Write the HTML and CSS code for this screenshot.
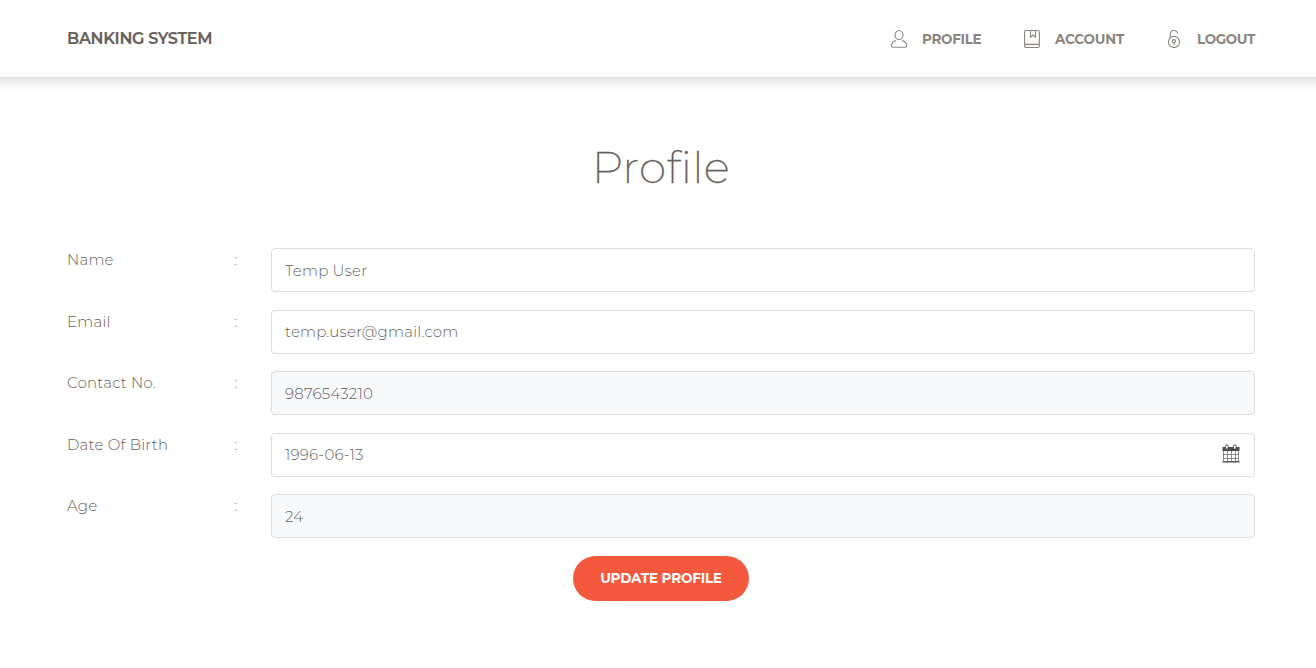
FILE: index.html
```html
<!DOCTYPE html>
<html lang="en">
<head>
<meta charset="utf-8">
<title>Profile</title>
<link rel="stylesheet" href="styles.css">
</head>
<body>
<header class="navbar">
  <a class="brand">BANKING SYSTEM</a>
  <nav class="nav">
    <a class="nav-link nav-profile">
      <svg class="nav-icon" viewBox="0 0 18 20"><ellipse cx="9" cy="6" rx="4" ry="4.5"/><path d="M5.9 11.6C3.2 12.2 1.5 14 1.5 16.7Q1.5 18.3 3.3 18.3H14.7Q16.5 18.3 16.5 16.7C16.5 14 14.8 12.2 12.1 11.6"/></svg>
      <span>PROFILE</span>
    </a>
    <a class="nav-link nav-account">
      <svg class="nav-icon" viewBox="0 0 18 20"><path d="M3.2 1.5H14.8Q16.4 1.5 16.4 3.1V16.9Q16.4 18.5 14.8 18.5H3.2Q1.6 18.5 1.6 16.9V3.1Q1.6 1.5 3.2 1.5ZM1.8 15.4H16.2M7.5 1.5V8.2L10 6L12.5 8.2V1.5"/></svg>
      <span>ACCOUNT</span>
    </a>
    <a class="nav-link nav-logout">
      <svg class="nav-icon" viewBox="0 0 18 20"><circle cx="9" cy="13" r="5.6"/><path d="M5.2 8.8V5.2C5.2 .3 12.3 .3 12.8 4.8M9 13.8V16"/><circle cx="9" cy="12.2" r="1.6"/></svg>
      <span>LOGOUT</span>
    </a>
  </nav>
</header>
<main class="content">
  <h1 class="title">Profile</h1>
  <form class="form">
    <div class="row"><label class="label">Name</label><span class="colon">:</span><div class="field"><span>Temp User</span></div></div>
    <div class="row"><label class="label">Email</label><span class="colon">:</span><div class="field"><span>temp.user@gmail.com</span></div></div>
    <div class="row"><label class="label">Contact No.</label><span class="colon">:</span><div class="field readonly"><span>9876543210</span></div></div>
    <div class="row"><label class="label">Date Of Birth</label><span class="colon">:</span><div class="field"><span>1996-06-13</span>
      <svg class="calendar" viewBox="0 0 18 19"><path class="cal-grid" d="M1.5 6V17.5H16.5V6M1 10.5H17M1 14.5H17M5.5 7V18M9.5 7V18M13.5 7V18"/><path class="cal-head" d="M.5 3H17.5V7H.5ZM.5 17.3H17.5V18.5H.5Z"/><rect class="cal-ring" x="3.5" y=".8" width="2.6" height="4.4" rx="1.3"/><rect class="cal-ring" x="11.5" y=".8" width="2.6" height="4.4" rx="1.3"/></svg>
    </div></div>
    <div class="row"><label class="label">Age</label><span class="colon">:</span><div class="field readonly"><span>24</span></div></div>
    <button class="submit" type="button">UPDATE PROFILE</button>
  </form>
</main>
</body>
</html>
```
FILE: styles.css
```css
* { box-sizing: border-box; }
body {
  margin: 0;
  background: #fff;
  color: #66615b;
  font-family: Montserrat, Inter, "Open Sans", sans-serif;
  font-size: 15px;
  font-weight: 300;
  letter-spacing: .22px;
}
.navbar {
  position: relative;
  height: 77px;
  padding: 0 60px 0 67px;
  display: flex;
  align-items: center;
  justify-content: space-between;
}
/* Shadow below the bar, even across the full width */
.navbar::after {
  content: "";
  position: absolute;
  top: 100%;
  left: 0;
  right: 0;
  height: 15px;
  background: linear-gradient(rgba(0, 0, 0, .11), rgba(0, 0, 0, .06) 35%, rgba(0, 0, 0, .018) 70%, transparent);
}
.brand { font-size: 16px; font-weight: 600; letter-spacing: -.3px; white-space: nowrap; -webkit-text-stroke: .2px; }
.nav { display: flex; gap: 41px; padding-top: 1px; }
.nav-link {
  display: flex;
  align-items: center;
  gap: 14px;
  color: #8a857f;
  font-size: 13.5px;
  font-weight: 700;
  white-space: nowrap;
}
.nav-icon { width: 18px; height: 20px; fill: none; stroke: #8a857f; stroke-width: 1.1; }
.nav-profile span { width: 60px; letter-spacing: -.28px; }
.nav-account span { width: 70px; letter-spacing: -.15px; }
.nav-logout span { width: 59px; letter-spacing: -.35px; }
.nav-logout { margin-left: -1px; }
.content { padding: 55px 61px 0 67px; }
.title {
  margin: 0 0 46px;
  height: 70px;
  line-height: 70px;
  text-align: center;
  font-size: 44px;
  font-weight: 200;
  letter-spacing: .35px;
  -webkit-text-stroke: .3px;
}
.form { display: flex; flex-direction: column; gap: 17.5px; }
.row { display: grid; grid-template-columns: 167px 37px 1fr; height: 44px; }
.label, .colon { line-height: 23px; white-space: nowrap; }
.colon { opacity: .85; }
.field {
  display: flex;
  align-items: center;
  justify-content: space-between;
  padding: 0 14px 0 13px;
  border: 1px solid #ddd;
  border-radius: 4px;
}
.readonly { background: #f8f9fb; }
.calendar { width: 18px; height: 19px; margin-bottom: 2px; }
.cal-grid { fill: none; stroke: #77716b; stroke-width: .8; }
.cal-head { fill: #4b4b4b; }
.cal-ring { fill: #fff; stroke: #4b4b4b; stroke-width: .9; }
.submit {
  align-self: center;
  width: 176px;
  height: 45px;
  padding: 0;
  border: 0;
  border-radius: 23px;
  background: #f5593d;
  color: #fff;
  font: 700 13.5px Montserrat, Inter, "Open Sans", sans-serif;
  letter-spacing: -.15px;
}
```
